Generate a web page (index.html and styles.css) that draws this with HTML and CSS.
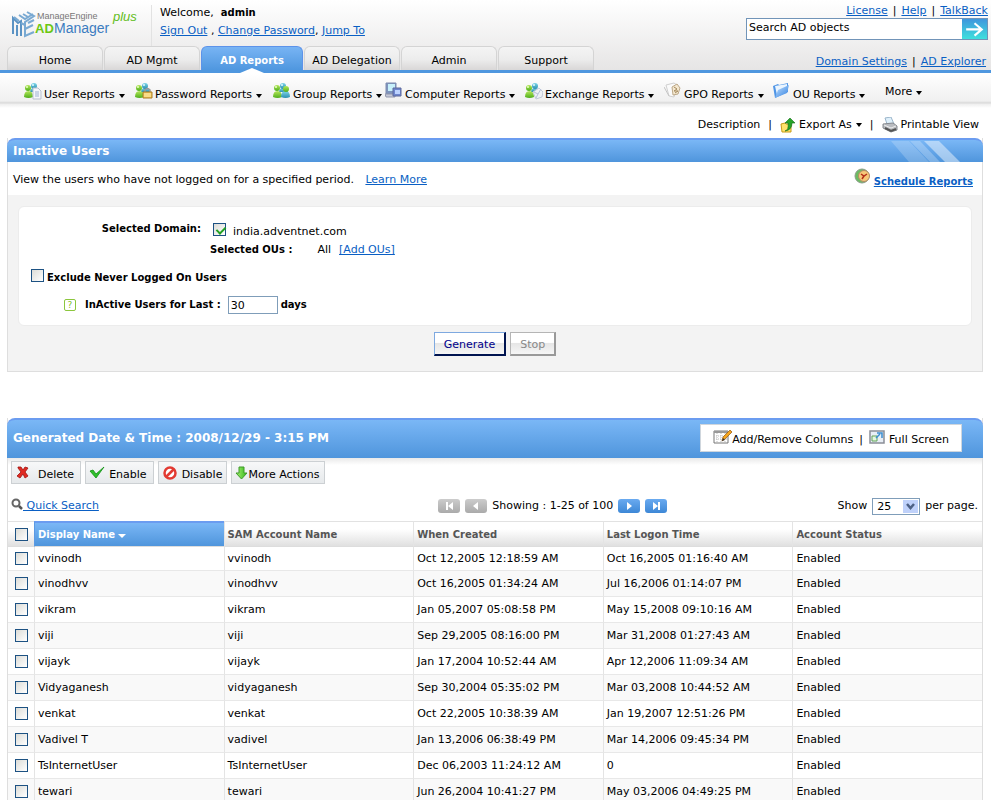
FILE: index.html
```html
<!DOCTYPE html>
<html lang="en">
<head>
<meta charset="utf-8">
<title>ADManager Plus - Inactive Users</title>
<link rel="stylesheet" href="styles.css">
</head>
<body>
<svg class="sprite" aria-hidden="true">
  <defs>
    <linearGradient id="green" x1="0" y1="0" x2="0" y2="1"><stop offset="0" stop-color="#b5e85a"/><stop offset="1" stop-color="#4fae1c"/></linearGradient>
    <linearGradient id="teal" x1="0" y1="0" x2="0" y2="1"><stop offset="0" stop-color="#7fd6ea"/><stop offset="1" stop-color="#2b8fae"/></linearGradient>
    <linearGradient id="folder" x1="0" y1="0" x2="1" y2="1"><stop offset="0" stop-color="#c4e2ff"/><stop offset="1" stop-color="#2f7fe0"/></linearGradient>
    <linearGradient id="down" x1="0" y1="0" x2="1" y2="0"><stop offset="0" stop-color="#a8f070"/><stop offset="1" stop-color="#33b81c"/></linearGradient>
    <symbol id="people" viewBox="0 0 18 18">
      <path d="M6 10q0-4 4.500-4t4.500 4z" fill="url(#teal)"/><circle cx="10" cy="4" r="3" fill="url(#teal)"/>
      <path d="M0 15q0-6 4.500-6T9 15q-4.500 2-9 0z" fill="url(#green)"/><circle cx="4" cy="6" r="3" fill="url(#green)"/>
      <circle cx="3" cy="5" r="1" fill="#eaffc8"/><circle cx="9" cy="3" r="1" fill="#e0faff"/>
    </symbol>
  </defs>
</svg>
<div class="page">
  <header class="header">
    <div class="brand-row">
      <svg class="logo" viewBox="0 0 134 36" role="img" aria-label="ManageEngine ADManager Plus">
        <g fill="none" stroke-width="2">
          <path d="M2 27V11l5 5 3-2v15M6 29V18" stroke="#5b93c4"/>
          <path d="M3 10l5 4M8 8l6 4 8-5M12 7l5 3M16 5l7 4-9 6v14l9-4M14 22l8-4M17 16l6-3M10 16l4 2" stroke="#79a9d2"/>
        </g>
        <text x="26" y="12" class="logo-small">ManageEngine</text>
        <text x="24" y="26" class="logo-ad">AD</text>
        <text x="43" y="26" class="logo-name">Manager</text>
        <text x="102" y="14" class="logo-plus">plus</text>
      </svg>
      <div class="welcome">
        <p>Welcome,&nbsp; <strong>admin</strong></p>
        <p><a href="#">Sign Out</a> , <a href="#">Change Password</a>, <a href="#">Jump To</a></p>
      </div>
      <div class="top-tools">
        <div class="links"><a href="#">License</a><span>|</span><a href="#">Help</a><span>|</span><a href="#">TalkBack</a></div>
        <form class="search">
          <input type="text" value="Search AD objects" aria-label="Search AD objects">
          <button type="button" aria-label="Go"><svg viewBox="0 0 24 20"><path d="M4 10h15M12 4l7 6-7 6" fill="none" stroke="#fff" stroke-width="2"/></svg></button>
        </form>
      </div>
    </div>
    <div class="tab-row">
      <nav class="tabs">
        <a href="#">Home</a><a href="#">AD Mgmt</a><a href="#" class="active">AD Reports</a><a href="#">AD Delegation</a><a href="#">Admin</a><a href="#">Support</a>
      </nav>
      <div class="links"><a href="#">Domain Settings</a><span>|</span><a href="#">AD Explorer</a></div>
    </div>
  </header>
  <nav class="subnav">
    <a href="#"><svg viewBox="0 0 18 18"><use href="#people"/><path d="M9 6h5l3 3v8H9z" fill="#f4f6fa" stroke="#b9c1cf"/><path d="M11 10h4M11 12h4M11 14h4" stroke="#9db2d3"/></svg>User Reports<i class="caret"></i></a>
    <a href="#"><svg viewBox="0 0 18 18"><use href="#people"/><path d="M10 10V8q2.500-3 5 0v2" fill="none" stroke="#999" stroke-width="1.500"/><path d="M8 10h9v6H8z" fill="#f3c85a" stroke="#a97c25"/><path d="M9 12h7M9 14h7" stroke="#fff0b5"/></svg>Password Reports<i class="caret"></i></a>
    <a href="#"><svg viewBox="0 0 18 18"><use href="#people"/><path d="M8 15q0-6 4.500-6t4.500 6q-4.500 2-9 0z" fill="url(#teal)"/><circle cx="13" cy="7" r="3" fill="url(#green)"/></svg>Group Reports<i class="caret"></i></a>
    <a href="#"><svg viewBox="0 0 18 18"><path d="M1 1h10v11H1z" fill="#7e94bd" stroke="#7c8bb0"/><path d="M3 2h7v7H3z" fill="#c7f0fa"/><path d="M0 12h10v3H1z" fill="#c5c9d8" stroke="#9297ad"/><path d="M8 6h8v8H8z" fill="#6f86ce" stroke="#5c689c"/><path d="M10 8h5v4h-5z" fill="#bdd3ff"/></svg>Computer Reports<i class="caret"></i></a>
    <a href="#"><svg viewBox="0 0 18 18"><use href="#people"/><path d="M8 10l6-4 4 4-1 5-6 2z" fill="#eef1f7" stroke="#c3cad8"/><path d="M9 10l4 2 3-5M13 12l-2 4" fill="none" stroke="#b5c1d8"/></svg>Exchange Reports<i class="caret"></i></a>
    <a href="#"><svg viewBox="0 0 18 18"><path d="M2 3l8-2 3 2-3 12-5-1z" fill="#fafafa" stroke="#d0d0d0"/><path d="M0 5l5 9" stroke="#c5c5c5"/><path d="M8 5l5-3 3 4-2 6-5 1z" fill="#f4e8d0" stroke="#bda888"/><path d="M10 5l3 2-3 2h4l-3 2" fill="none" stroke="#a58a5e"/></svg>GPO Reports<i class="caret"></i></a>
    <a href="#"><svg viewBox="0 0 18 18"><path d="M0 4l5-2 1 1 9-2v9L2 16z" fill="#4f95e6"/><path d="M2 4l12-2v6L4 13z" fill="#eaf5ff"/><path d="M2 16L5 8l11-5-2 8z" fill="url(#folder)"/></svg>OU Reports<i class="caret"></i></a>
    <a href="#" class="more">More<i class="caret"></i></a>
  </nav>
  <div class="page-tools">
    <a href="#">Description</a><span>|</span>
    <a href="#"><svg viewBox="0 0 16 16"><path d="M1 7l4-1 1 1h5v8H2z" fill="#ffe36b" stroke="#c79a18"/><path d="M5 14q4-1 3-8H5l5-5 5 5h-3q0 7-7 8z" fill="#28a428" stroke="#106a16" stroke-width=".6"/></svg>Export As<i class="caret"></i></a><span>|</span>
    <a href="#"><svg viewBox="0 0 16 16"><path d="M3 1l6-1 3 7H5z" fill="#dff0fb" stroke="#9bb5ca"/><path d="M1 7l10-1 4 3v4l-6 2-8-4z" fill="#b9bcc1" stroke="#85898f"/><path d="M2 8l7 3 5-2" fill="none" stroke="#eee"/><path d="M3 11l6 3 5-2" fill="none" stroke="#555" stroke-width="2"/></svg>Printable View</a>
  </div>
  <main>
    <section class="panel">
      <div class="panel-head"><h1>Inactive Users</h1>
        <svg class="stripes" viewBox="0 0 80 22"><path d="M0 1h18l20 21H18z" fill="#fff" opacity=".2"/><path d="M19 1h10l20 21H39z" fill="#fff" opacity=".25"/><path d="M33 1h15l21 21H54z" fill="#fff" opacity=".45"/></svg>
      </div>
      <div class="intro">
        <p>View the users who have not logged on for a specified period. <a href="#">Learn More</a></p>
        <a href="#" class="schedule"><svg viewBox="0 0 17 16"><circle cx="8" cy="8" r="7" fill="#6cbc62" stroke="#8c9b8a"/><circle cx="10" cy="8" r="5.500" fill="#f6c879" stroke="#b48b66"/><path d="M7 6l3 2 3-2M10 8l-2 3" fill="none" stroke="#b32d18" stroke-width="1.500"/></svg><b>Schedule Reports</b></a>
      </div>
      <form class="criteria">
        <div class="box">
          <div class="line domain"><b>Selected Domain:</b><input type="checkbox" id="dom" checked><label for="dom">india.adventnet.com</label></div>
          <div class="line ous"><b>Selected OUs :</b><span>All</span><a href="#">[Add OUs]</a></div>
          <div class="line exclude"><input type="checkbox" id="exc"><label for="exc"><b>Exclude Never Logged On Users</b></label></div>
          <div class="line days"><span class="help">?</span><label for="days"><b>InActive Users for Last :</b></label><input type="text" id="days" value="30"><b>days</b></div>
        </div>
        <div class="actions"><button type="button" class="generate">Generate</button><button type="button" class="stop" disabled>Stop</button></div>
      </form>
    </section>

    <section class="panel results">
      <div class="panel-head tall"><h2>Generated Date &amp; Time : 2008/12/29 - 3:15 PM</h2>
        <div class="view-tools">
          <a href="#"><svg viewBox="0 0 19 16"><path d="M1 2h14v12H1z" fill="#fff" stroke="#777"/><path d="M1 2h14v2H1z" fill="#999"/><path d="M4 4v10M8 4v10M12 4v10M1 7h14M1 10h14" stroke="#bbb" stroke-dasharray="1 1"/><path d="M9 12l1-4 7-7 2 2-7 7z" fill="#f5a51d" stroke="#8f5410" stroke-width=".7"/><path d="M9 12l1-3 2 2z" fill="#333"/></svg>Add/Remove Columns</a><span>|</span>
          <a href="#"><svg class="fs" viewBox="0 0 16 14"><path d="M1 1h14v12H1z" fill="#e8eef6" stroke="#8a8f98" stroke-width="1.500"/><path d="M3 6h5v5H3z" fill="#e4f7e0" stroke="#62a35b"/><path d="M7 8l4-4M8 3h5v5" fill="none" stroke="#3b8fd1" stroke-width="1.500"/></svg>Full Screen</a>
        </div>
      </div>
      <div class="toolbar">
        <button type="button"><svg viewBox="0 0 16 16"><path d="M3 2l3 0 2 3 2-3 3 1-3 4 3 4-3 2-2-4-3 4-3-2 4-4-3-4z" fill="#e02a22" stroke="#a01410" stroke-width=".8"/></svg><span>Delete</span></button>
        <button type="button"><svg viewBox="0 0 16 16"><path d="M1 6l3-1 3 4 8-7-8 11z" fill="#2fbf2a" stroke="#129014" stroke-width=".8"/></svg><span>Enable</span></button>
        <button type="button"><svg viewBox="0 0 16 16"><circle cx="8" cy="8" r="5.500" fill="#fff" stroke="#e23a32" stroke-width="2.500"/><path d="M4 12l8-8" stroke="#e23a32" stroke-width="2.500"/></svg><span>Disable</span></button>
        <button type="button" class="tight"><svg viewBox="0 0 13 14"><path d="M4 1h5v6h3l-5.500 6L1 7h3z" fill="url(#down)" stroke="#3f9a2a"/></svg><span>More Actions</span></button>
      </div>
      <div class="pager-row">
        <a href="#" class="quick"><svg viewBox="0 0 12 12"><circle cx="5" cy="5" r="3.500" fill="none" stroke="#666" stroke-width="2"/><path d="M8 8l3 3" stroke="#555" stroke-width="2.500"/></svg>&nbsp;Quick Search</a>
        <div class="pager">
          <button type="button" disabled aria-label="First"><svg viewBox="0 0 22 14"><path d="M8 3h2v8H8zM15 3v8l-5-4z" fill="#fff"/></svg></button>
          <button type="button" disabled aria-label="Previous"><svg viewBox="0 0 22 14"><path d="M13 3v8L8 7z" fill="#fff"/></svg></button>
          <span>Showing : 1-25 of 100</span>
          <button type="button" aria-label="Next"><svg viewBox="0 0 22 14"><path d="M9 3v8l5-4z" fill="#fff"/></svg></button>
          <button type="button" aria-label="Last"><svg viewBox="0 0 22 14"><path d="M8 3v8l5-4zM13 3h2v8h-2z" fill="#fff"/></svg></button>
        </div>
        <div class="per-page"><label for="pp">Show</label>
          <span class="picker"><select id="pp"><option>25</option><option>50</option></select><svg viewBox="0 0 15 13"><path d="M0 0h15v13H0z" fill="#bfd1fa"/><path d="M4 4l3.500 4L11 4" fill="none" stroke="#4d6185" stroke-width="2.500"/></svg></span>
          <span>per page.</span></div>
      </div>
      <table>
        <colgroup><col class="c-check"><col><col><col><col><col></colgroup>
        <thead><tr><th><input type="checkbox" aria-label="Select all"></th><th class="sorted">Display Name<i class="caret"></i></th><th>SAM Account Name</th><th>When Created</th><th>Last Logon Time</th><th>Account Status</th></tr></thead>
        <tbody>
          <tr><td><input type="checkbox" aria-label="vvinodh"></td><td>vvinodh</td><td>vvinodh</td><td>Oct 12,2005 12:18:59 AM</td><td>Oct 16,2005 01:16:40 AM</td><td>Enabled</td></tr>
          <tr><td><input type="checkbox" aria-label="vinodhvv"></td><td>vinodhvv</td><td>vinodhvv</td><td>Oct 16,2005 01:34:24 AM</td><td>Jul 16,2006 01:14:07 PM</td><td>Enabled</td></tr>
          <tr><td><input type="checkbox" aria-label="vikram"></td><td>vikram</td><td>vikram</td><td>Jan 05,2007 05:08:58 PM</td><td>May 15,2008 09:10:16 AM</td><td>Enabled</td></tr>
          <tr><td><input type="checkbox" aria-label="viji"></td><td>viji</td><td>viji</td><td>Sep 29,2005 08:16:00 PM</td><td>Mar 31,2008 01:27:43 AM</td><td>Enabled</td></tr>
          <tr><td><input type="checkbox" aria-label="vijayk"></td><td>vijayk</td><td>vijayk</td><td>Jan 17,2004 10:52:44 AM</td><td>Apr 12,2006 11:09:34 AM</td><td>Enabled</td></tr>
          <tr><td><input type="checkbox" aria-label="Vidyaganesh"></td><td>Vidyaganesh</td><td>vidyaganesh</td><td>Sep 30,2004 05:35:02 PM</td><td>Mar 03,2008 10:44:52 AM</td><td>Enabled</td></tr>
          <tr><td><input type="checkbox" aria-label="venkat"></td><td>venkat</td><td>venkat</td><td>Oct 22,2005 10:38:39 AM</td><td>Jan 19,2007 12:51:26 PM</td><td>Enabled</td></tr>
          <tr><td><input type="checkbox" aria-label="Vadivel T"></td><td>Vadivel T</td><td>vadivel</td><td>Jan 13,2006 06:38:49 PM</td><td>Mar 14,2006 09:45:34 PM</td><td>Enabled</td></tr>
          <tr><td><input type="checkbox" aria-label="TsInternetUser"></td><td>TsInternetUser</td><td>TsInternetUser</td><td>Dec 06,2003 11:24:12 AM</td><td>0</td><td>Enabled</td></tr>
          <tr><td><input type="checkbox" aria-label="tewari"></td><td>tewari</td><td>tewari</td><td>Jun 26,2004 10:41:27 PM</td><td>May 03,2006 04:49:25 PM</td><td>Enabled</td></tr>
        </tbody>
      </table>
    </section>
  </main>
</div>
</body>
</html>
```
FILE: styles.css
```css
* { box-sizing: border-box; }
body, p, h1, h2 { margin: 0; }
body {
  background: #fff;
  color: #000;
  font: 11px/16px Verdana, "DejaVu Sans", sans-serif;
}
h1, h2, button, input, select { font: inherit; }
h1, h2 { font-weight: bold; font-size: 12px; color: #fff; }
b, strong { font-size: 10px; }
a { color: #0a5fc4; }
svg { display: block; flex: none; }
.sprite { position: absolute; width: 0; height: 0; }
.page { margin-right: 5px; }

.caret {
  display: inline-block;
  flex: none;
  border: 3px solid transparent;
  border-top: 4px solid currentColor;
  border-bottom: 0;
  margin-left: 4px;
}

/* Header */
.header {
  background: linear-gradient(#fff, #e6e5e5);
  border-bottom: 3px solid #4f97df;
}
.brand-row { display: flex; height: 46px; }
.logo { width: 134px; height: 36px; margin: 7px 0 0 11px; }
.logo-small { font: 9px "Liberation Sans", sans-serif; fill: #777; }
.logo-ad { font: bold 13px "Liberation Sans", sans-serif; fill: #6cc712; }
.logo-name { font: 14px "Liberation Sans", sans-serif; fill: #3c7cc0; }
.logo-plus { font: italic 13px "Liberation Sans", sans-serif; fill: #62bd22; }
.welcome {
  margin: 5px 0 0 6px;
  padding-left: 8px;
  border-left: 1px solid #e2e2e2;
}
.welcome p + p { margin-top: 2px; }
.top-tools { margin-left: auto; padding: 3px 3px 0 0; }
.links { display: flex; justify-content: flex-end; gap: 5px; }
.search { display: flex; width: 242px; max-width: 100%; height: 22px; border: 1px solid #7194b8; }
.top-tools .links { height: 15px; }
.search input { flex: 1; min-width: 0; border: 0; padding: 0 2px 3px; outline: 0; }
.search button {
  width: 25px;
  padding: 0;
  border: 0;
  background: linear-gradient(#3f96dd, #3fe0dd);
}
.tab-row { display: flex; height: 24px; padding: 0 5px 0 7px; }
.tabs { display: flex; gap: 1px; }
.tabs a {
  position: relative;
  width: 96px;
  padding-top: 6px;
  text-align: center;
  color: #000;
  text-decoration: none;
  border: 1px solid #d4d4d4;
  border-bottom: 0;
  border-radius: 6px 6px 0 0;
  background: linear-gradient(#f4f4f4, #ececec 55%, #d9d7d7);
}
.tabs .active {
  width: 102px;
  color: #fff;
  font-size: 10px;
  font-weight: bold;
  border-color: #5c93ea;
  background: linear-gradient(#78b4f4, #4f97df);
}
.tabs .active::after {
  content: "";
  position: absolute;
  left: 50%;
  bottom: -3px;
  margin-left: -12px;
  border: 12px solid transparent;
  border-top: 0;
  border-bottom: 5px solid #fff;
}
.tab-row .links { margin-left: auto; padding-top: 8px; }

/* Report menu */
.subnav {
  display: grid;
  grid-template-columns: 111px 138px 112px 140px 139px 109px 112px auto;
  height: 35px;
  padding: 8px 0 0 24px;
  background: linear-gradient(#fff, #f0f0f0 28px, #e4e4e4 29px, #d8d8d8 30px, #eee 31px, #fff);
}
.subnav a, .page-tools a { display: flex; align-items: center; color: #000; text-decoration: none; white-space: nowrap; }
.subnav a { align-items: flex-start; height: 24px; padding-top: 6px; }
.subnav svg { width: 18px; height: 18px; margin: -5px 2px 0 0; }
.subnav .caret { margin-top: 7px; }
.subnav .more { padding-top: 3px; }

.page-tools { display: flex; justify-content: flex-end; gap: 8px; padding: 9px 12px 5px; }
.page-tools svg { width: 16px; height: 16px; margin-right: 3px; }

/* Panels */
.panel { margin: 0 8px 0 7px; border: 1px solid #dedede; border-top: 0; }
.panel-head {
  display: flex;
  justify-content: space-between;
  height: 24px;
  margin: 0 -1px;
  padding: 3px 12px 0 6px;
  border-top: 2px solid #6b9cf0;
  border-radius: 8px 8px 0 0;
  background: linear-gradient(#7ab7f6, #4f95dc);
}
.stripes { width: 80px; height: 22px; margin-top: -3px; }
.intro { display: flex; justify-content: space-between; height: 33px; padding: 10px 9px 0 5px; }
.intro p a { margin-left: 8px; }
.schedule { display: flex; gap: 3px; padding-top: 2px; }
.schedule svg { width: 17px; height: 16px; margin-top: -6px; }
.criteria { padding: 11px 10px 15px 10px; background: #f3f3f3; }
.box { height: 120px; padding: 13px 12px 0; border: 1px solid #ececec; border-radius: 6px; background: #fff; }
.line { display: flex; align-items: center; height: 18px; }
.line b { white-space: nowrap; }
.domain b { width: 170px; text-align: right; }
.domain input { margin: 0 7px 0 12px; }
.domain label { padding-top: 5px; }
.ous { height: 20px; padding: 4px 0 0 179px; }
.ous span { margin: 0 8px 0 25px; }
.exclude { margin-top: 10px; }
.exclude input { margin: 0 3px 4px 0; }
.exclude label { padding-top: 2px; }
.days { margin: 10px 0 0 33px; }
.help {
  width: 12px;
  height: 12px;
  margin-right: 9px;
  border: 1px solid #8cc63e;
  border-radius: 2px;
  color: #7fbf2c;
  font-size: 9px;
  line-height: 10px;
  text-align: center;
}
.days input { width: 50px; height: 18px; margin: 0 3px 0 7px; padding: 0 2px; border: 1px solid #7f9db9; }
input[type="checkbox"] {
  appearance: none;
  flex: none;
  width: 13px;
  height: 13px;
  border: 1px solid #1d5283;
  background: linear-gradient(135deg, #dcdcd7, #fff);
}
input[type="checkbox"]:checked::after {
  content: "";
  display: block;
  width: 4px;
  height: 7px;
  margin: 1px 0 0 4px;
  border: solid #21a121;
  border-width: 0 2px 2px 0;
  transform: rotate(45deg);
}
.actions { display: flex; justify-content: center; gap: 4px; padding-top: 6px; }
.actions button {
  height: 24px;
  padding: 3px 9px 0;
  border: 1px solid #7ea9e0;
  border-right: 2px solid #001450;
  border-bottom: 2px solid #001450;
  color: #00008b;
  background: linear-gradient(#fff 45%, #e6e6e6 50%, #f6f6f6);
}
.actions .stop { border-color: #b5b5b5 #999 #999 #b5b5b5; color: #888; }

/* Results */
.results { margin-top: 46px; }
.panel-head.tall { height: 40px; padding: 4px 21px 0 6px; }
.tall h2 { padding-top: 6px; }
.view-tools {
  display: flex;
  align-items: center;
  gap: 6px;
  height: 28px;
  padding: 3px 12px 0;
  border: 1px solid #cfd6dd;
  background: #fff;
}
.view-tools a { display: flex; align-items: center; color: #000; text-decoration: none; }
.view-tools svg { width: 19px; height: 16px; margin-bottom: 5px; }
.view-tools .fs { width: 16px; height: 14px; margin-right: 4px; }
.toolbar { display: flex; gap: 4px; padding: 3px 3px 0; background: linear-gradient(#e9e9e9, #fff 7px); }
.toolbar button {
  display: flex;
  align-items: center;
  gap: 7px;
  height: 23px;
  padding: 0 6px 0 3px;
  border: 1px solid #ccd0d3;
  background: linear-gradient(#f7f8f9, #e6e9eb);
}
.toolbar span { padding-top: 4px; }
.toolbar svg { width: 16px; height: 16px; }
.toolbar button:nth-child(2) { gap: 4px; }
.toolbar button:nth-child(3) { gap: 4px; padding-right: 4px; }
.toolbar .tight { gap: 0; padding-right: 5px; }
.tight svg { width: 13px; height: 14px; }
.pager-row { display: grid; grid-template-columns: 11fr auto 8fr; align-items: center; height: 37px; padding: 7px 4px 0 3px; }
.quick { display: flex; }
.quick svg { width: 12px; height: 12px; }
.pager, .per-page { display: flex; align-items: center; gap: 5px; }
.per-page { justify-content: flex-end; white-space: nowrap; }
.pager button { width: 22px; height: 14px; padding: 0; border: 0; border-radius: 3px; background: linear-gradient(#6aaaf0, #3d87d6); }
.pager button:disabled { background: linear-gradient(#ccc, #aaa); }
.picker { display: grid; align-items: center; justify-items: end; }
.picker > * { grid-area: 1 / 1; }
.picker svg { width: 15px; height: 13px; margin-right: 2px; pointer-events: none; }
.picker select {
  appearance: none;
  width: 48px;
  height: 17px;
  padding: 0 4px;
  border: 1px solid #7f9db9;
  border-radius: 0;
  color: #000;
  background: #fff;
}

table { width: 100%; table-layout: fixed; border-collapse: separate; border-spacing: 0; }
.c-check { width: 26px; }
th, td { padding: 1px 3px 0; border-left: 1px solid #e4e4e4; text-align: left; white-space: nowrap; }
th:first-child, td:first-child { border-left: 0; padding: 0 0 0 7px; }
th {
  height: 26px;
  padding-top: 2px;
  border-top: 1px solid #e2e2e2;
  border-bottom: 1px solid #ddd;
  color: #555;
  font-size: 10px;
  background: linear-gradient(#fff 30%, #e0e0e0);
}
th.sorted { padding-top: 1px; color: #fff; border-top: 2px solid #6b9cf0; border-left-color: #5b9ae4; background: linear-gradient(#7ab7f6, #4f95dc); }
.sorted .caret { border-width: 4px 4px 0; margin: 0 0 0 3px; }
td { height: 26px; border-bottom: 1px solid #e8e8e8; }
tbody tr:first-child td { height: 24px; padding-top: 0; }
tbody tr:nth-child(even) { background: #f9f9f9; }
table input[type="checkbox"] { display: block; margin: 0; }
```
